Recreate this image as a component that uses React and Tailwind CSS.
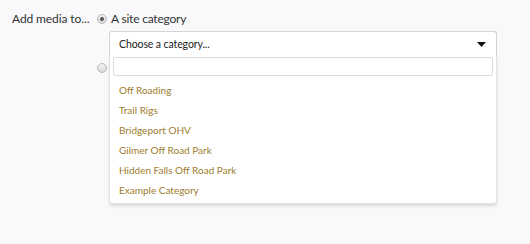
import React from 'react';

const categories = [
  'Off Roading',
  'Trail Rigs',
  'Bridgeport OHV',
  'Gilmer Off Road Park',
  'Hidden Falls Off Road Park',
  'Example Category',
];

function Radio({ checked }) {
  return (
    <span className="flex h-[10px] w-[10px] items-center justify-center rounded-full border border-[#b9b9b9] bg-gradient-to-b from-[#f4f4f4] to-[#d8d8d8]">
      {checked && <span className="h-[4px] w-[4px] rounded-full bg-[#555]" />}
    </span>
  );
}

export default function App() {
  return (
    <div className="flex h-[244px] w-[530px] bg-[#f9f9fb] pl-[12px] pt-[11px] text-[#333] [font-family:Lato,'Open_Sans',sans-serif]">
      <div className="w-[85px] text-[12px] leading-[16px] tracking-[-0.1px]">Add media to...</div>
      <div className="flex flex-col">
        <div className="flex items-center gap-[4px] text-[12px] leading-[16px] tracking-[-0.2px]">
          <Radio checked />
          <span>A site category</span>
        </div>
        <div className="relative ml-[12px] mt-[4px] w-[388px]">
          <div className="flex h-[26px] items-center justify-between rounded-t-[3px] border border-b-0 border-[#d4d4d4] bg-white pl-[9px] pr-[10px] text-[10.5px] tracking-[-0.1px] text-[#222]">
            <span>Choose a category...</span>
            <svg width="9" height="5" viewBox="0 0 9 5">
              <path d="M0 0h9L4.5 5z" fill="#111" />
            </svg>
          </div>
          <div className="absolute left-0 top-[26px] z-10 w-[388px] rounded-b-[3px] border border-t-0 border-[#e2e2e2] bg-white px-[3px] pb-[3px] shadow-[0_2px_3px_rgba(0,0,0,0.12)]">
            <div className="h-[19px] rounded-[2px] border border-[#dcdcdc] bg-white" />
            <ul className="mt-[4px]">
              {categories.map(c => (
                <li key={c} className="flex h-[20px] items-center pl-[6px] text-[10px] text-[#9c7d2c]">
                  {c}
                </li>
              ))}
            </ul>
          </div>
        </div>
        <div className="mt-[6px] flex items-center">
          <Radio />
        </div>
      </div>
    </div>
  );
}
